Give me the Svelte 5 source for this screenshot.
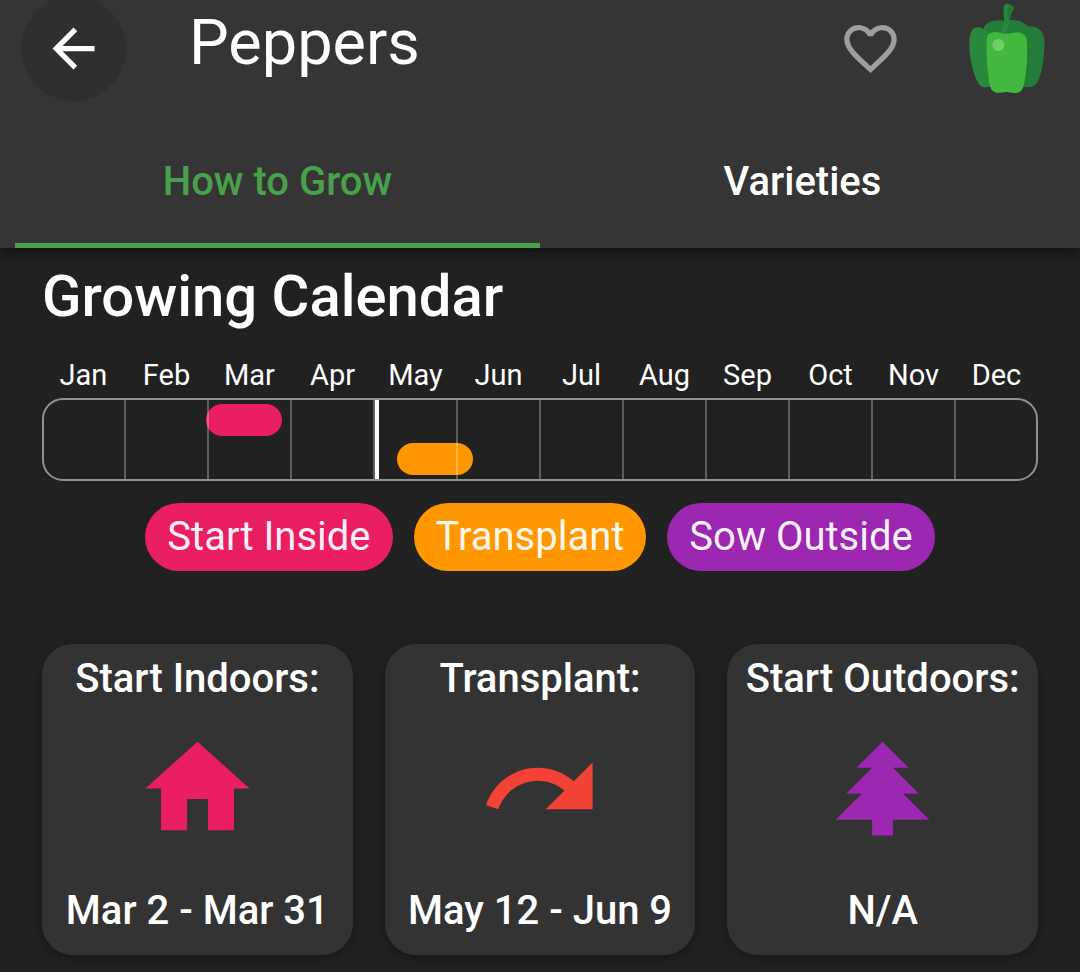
<script>
  const months = ['Jan', 'Feb', 'Mar', 'Apr', 'May', 'Jun', 'Jul', 'Aug', 'Sep', 'Oct', 'Nov', 'Dec'];

  // Positions are percentages of the year.
  const periods = [
    { kind: 'inside', start: 16.45, length: 7.65 },
    { kind: 'transplant', start: 35.65, length: 7.65 }
  ];
  const today = 33.45;

  const legend = [
    { kind: 'inside', label: 'Start Inside' },
    { kind: 'transplant', label: 'Transplant' },
    { kind: 'outside', label: 'Sow Outside' }
  ];

  const cards = [
    {
      title: 'Start Indoors:',
      dates: 'Mar 2 - Mar 31',
      color: '#e91e63',
      icon: 'M10 20V14H14V20H19V12H22L12 3L2 12H5V20H10Z'
    },
    {
      title: 'Transplant:',
      dates: 'May 12 - Jun 9',
      color: '#f44336',
      icon: 'M18.4 10.6C16.55 9 14.15 8 11.5 8C6.85 8 2.92 11.03 1.54 15.22L3.9 16C4.95 12.81 7.95 10.5 11.5 10.5C13.45 10.5 15.23 11.22 16.62 12.38L13 16H22V7L18.4 10.6Z'
    },
    {
      title: 'Start Outdoors:',
      dates: 'N/A',
      color: '#9c27b0',
      icon: 'M10 21V18H3L8 13H5L10 8H7L12 3L17 8H14L19 13H16L21 18H14V21H10Z'
    }
  ];

  const tabs = ['How to Grow', 'Varieties'];
  let active = $state('How to Grow');
  let favorite = $state(false);
</script>

<div class="page">
  <header>
    <div class="bar">
      <button class="back" aria-label="Back">
        <svg viewBox="0 0 24 24"><path fill="#fff" d="M20 11H7.83l5.59-5.59L12 4l-8 8 8 8 1.41-1.41L7.83 13H20v-2z" /></svg>
      </button>
      <h1>Peppers</h1>
      <button class="favorite" aria-label="Favorite" aria-pressed={favorite} onclick={() => (favorite = !favorite)}>
        <svg viewBox="0 0 24 24"><path fill="#9e9e9e" d="M16.5 3c-1.74 0-3.41.81-4.5 2.09C10.91 3.81 9.24 3 7.5 3 4.42 3 2 5.42 2 8.5c0 3.78 3.4 6.86 8.55 11.54L12 21.35l1.45-1.32C18.6 15.36 22 12.28 22 8.5 22 5.42 19.58 3 16.5 3zm-4.4 15.55l-.1.1-.1-.1C7.14 14.24 4 11.39 4 8.5 4 6.5 5.5 5 7.5 5c1.54 0 3.04.99 3.57 2.36h1.87C13.46 5.99 14.96 5 16.5 5c2 0 3.5 1.5 3.5 3.5 0 2.89-3.14 5.74-7.9 10.05z" /></svg>
      </button>
      <svg class="pepper" viewBox="440 6 240 276" aria-hidden="true">
        <path fill="#237d39" d="M490 82C500 66 520 58 550 62C580 57 604 60 623 79C650 76 669 91 672 118C674 163 666 214 653 244C646 259 632 264 612 261L510 240Z" />
        <path fill="#28883d" d="M506 101C493 84 470 74 456 89C443 107 446 151 452 184C459 219 469 247 480 257C488 263 500 263 510 259Z" />
        <path fill="#28883d" d="M552 14C562 9 578 14 582 25C575 34 570 43 569 57C567 72 562 82 558 98H544C549 83 552 71 551 55C549 40 549 26 552 14Z" />
        <path fill="#1f7a37" d="M569 14C575 16 580 20 582 25C575 34 570 43 569 57L566 65C558 45 560 27 569 14Z" />
        <path fill="#42b83f" d="M500 112C503 97 522 93 540 98C554 103 568 101 580 98C602 95 617 103 619 120C623 164 619 212 611 253C608 270 599 280 583 279C574 279 567 276 559 276C550 277 540 279 531 278C516 277 509 266 507 249C500 203 496 151 500 112Z" />
        <circle cx="534" cy="135" r="18" fill="#6fcf6b" />
      </svg>
    </div>
    <div class="tabs" role="tablist">
      {#each tabs as tab}
        <button role="tab" aria-selected={active === tab} class:active={active === tab} onclick={() => (active = tab)}>{tab}</button>
      {/each}
    </div>
  </header>

  <main>
    <h2>Growing Calendar</h2>
    <div class="months">
      {#each months as month}<span>{month}</span>{/each}
    </div>
    <div class="calendar">
      {#each periods as period}
        <div class="period {period.kind}" style="left: {period.start}%; width: {period.length}%"></div>
      {/each}
      <div class="cells">
        {#each months as _}<i></i>{/each}
      </div>
      <div class="today" style="left: {today}%"></div>
    </div>

    <div class="legend">
      {#each legend as item}<span class={item.kind}>{item.label}</span>{/each}
    </div>

    <div class="cards">
      {#each cards as card}
        <article>
          <h3>{card.title}</h3>
          <svg viewBox="0 0 24 24" aria-hidden="true"><path fill={card.color} d={card.icon} /></svg>
          <p>{card.dates}</p>
        </article>
      {/each}
    </div>
  </main>
</div>

<style>
  :global(body) {
    margin: 0;
    background: #212121;
  }
  .page {
    color: #fff;
    font-family: Roboto, sans-serif;
    overflow: hidden;
  }
  h1, h2, h3, p {
    margin: 0;
    font-weight: 500;
  }
  button {
    border: 0;
    padding: 0;
    background: none;
    color: inherit;
    font: inherit;
    cursor: pointer;
  }
  svg {
    display: block;
  }
  header {
    position: relative;
    background: #353535;
    box-shadow: 0 4px 14px rgba(0, 0, 0, 0.55);
  }
  .bar {
    display: flex;
    align-items: center;
    height: 96px;
    padding: 0 33px 0 21px;
  }
  .back {
    display: grid;
    place-items: center;
    width: 105px;
    height: 105px;
    border-radius: 50%;
    background: #2f2f2f;
  }
  .back svg, .favorite svg {
    width: 63px;
    height: 63px;
  }
  h1 {
    flex: 1;
    margin-left: 63px;
    padding-bottom: 10px;
    font-size: 63px;
    line-height: 72px;
    font-weight: 400;
  }
  .pepper {
    width: 80px;
    height: 92px;
    margin-left: 65px;
  }
  .tabs {
    display: flex;
    padding: 20px 15px 0;
  }
  .tabs button {
    flex: 1;
    box-sizing: border-box;
    height: 132px;
    padding-top: 5px;
    border-bottom: 5px solid transparent;
    font-size: 40px;
    line-height: 48px;
    font-weight: 500;
  }
  .tabs .active {
    color: #48a04b;
    border-color: #48a04b;
  }
  main {
    padding: 16px 42px 17px;
  }
  h2 {
    font-size: 58px;
    line-height: 64px;
  }
  .months {
    display: grid;
    grid-template-columns: repeat(12, 1fr);
    margin-top: 29px;
    font-size: 29px;
    line-height: 36px;
    text-align: center;
  }
  .calendar {
    position: relative;
    height: 83px;
    margin-top: 5px;
  }
  .cells {
    position: absolute;
    inset: 0;
    display: grid;
    grid-template-columns: repeat(12, 1fr);
  }
  .cells::after {
    content: '';
    position: absolute;
    inset: 0;
    border: 2px solid #909090;
    border-radius: 21px;
  }
  .cells i + i {
    border-left: 2px solid rgba(255, 255, 255, 0.28);
    margin-left: -1px;
  }
  .period {
    position: absolute;
    top: 6px;
    height: 32px;
    border-radius: 16px;
  }
  .period.transplant {
    top: 45px;
  }
  .today {
    position: absolute;
    top: 2px;
    bottom: 2px;
    width: 4px;
    background: #fff;
  }
  .inside {
    background: #e91e63;
  }
  .transplant {
    background: #ff9800;
  }
  .outside {
    background: #9c27b0;
  }
  .legend {
    display: flex;
    justify-content: center;
    gap: 21px;
    margin-top: 22px;
  }
  .legend span {
    padding: 10px 22px;
    border-radius: 34px;
    font-size: 40px;
    line-height: 48px;
    color: #fffffff0;
  }
  .cards {
    display: grid;
    grid-template-columns: repeat(3, 1fr);
    gap: 32px;
    margin-top: 73px;
  }
  article {
    display: flex;
    flex-direction: column;
    align-items: center;
    justify-content: space-between;
    box-sizing: border-box;
    aspect-ratio: 1;
    padding: 11px 0 20px;
    border-radius: 31px;
    background: #333;
    box-shadow: 0 3px 10px rgba(0, 0, 0, 0.3);
    font-size: 40px;
    line-height: 48px;
    white-space: nowrap;
  }
  article svg {
    width: 125px;
    height: 125px;
    margin-bottom: 12px;
  }
  h3 {
    font-size: 40px;
  }
</style>
